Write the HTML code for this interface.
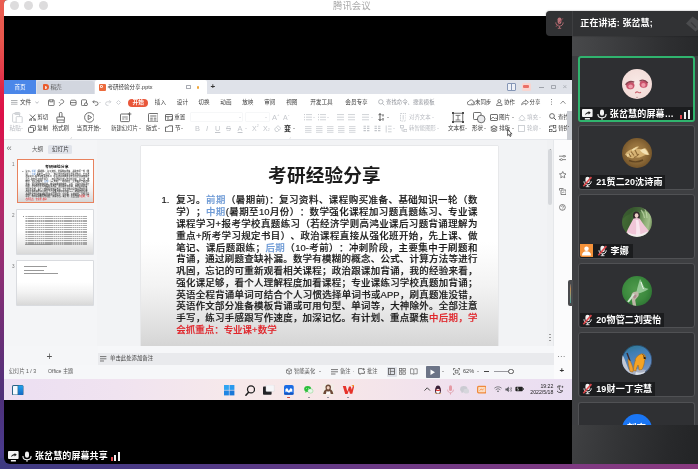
<!DOCTYPE html>
<html lang="zh-CN">
<head>
<meta charset="utf-8">
<title>腾讯会议</title>
<style>
*{box-sizing:border-box;margin:0;padding:0}
html,body{width:698px;height:469px;overflow:hidden}
body{position:relative;background:#000;font-family:"Liberation Sans","Noto Sans CJK SC",sans-serif;color:#333}
.abs,.abs *{position:absolute}
.abs{position:absolute}
.t{white-space:nowrap;line-height:1}
#wall{left:0;top:0;width:698px;height:469px;background:linear-gradient(180deg,#eb5e52 0%,#e8564c 8.5%,#e43c4a 15%,#de1848 21%,#dc1048 24.5%,#cc1c56 34%,#b02a6a 45%,#8e2e74 58%,#782e76 66%,#5c3078 78%,#4e307a 85%,#4a3a8c 96%,#3e3a80 100%)}
#wallb{left:0;top:458px;width:698px;height:11px;background:linear-gradient(90deg,#3e3a80 0%,#4e3a86 25%,#6e3a86 55%,#8a3a80 100%)}
#win{left:4px;top:0;width:694px;height:464px;background:#000;border-radius:4px 0 0 6px;overflow:hidden;will-change:transform}
#titlebar{left:0;top:0;width:694px;height:16px;background:#fff}
.tl{width:9px;height:9px;border-radius:50%;background:#dddcdd;top:1.3px}
#share{left:0;top:80px;width:568px;height:320px;background:#f3f4f6;overflow:hidden}
#rpanel{left:568px;top:16px;width:126px;height:448px;background:linear-gradient(180deg,#3a3b3d 0%,#3e3f42 12%,#3e3f42 100%)}
</style>
</head>
<body>
<div id="wall" class="abs"></div><div id="wallb" class="abs"></div>
<div id="win" class="abs">
  <div id="titlebar" class="abs">
    <div class="tl" style="left:5.5px"></div>
    <div class="tl" style="left:20px"></div>
    <div class="tl" style="left:34.7px"></div>
    <div class="t" style="left:329.1px;top:1px;font-size:9.4px;color:#aaa">腾讯会议</div>
  </div>
  <div id="share" class="abs">
  <style>
#share .s{font-size:5.6px;color:#3a3a3a;line-height:1;white-space:nowrap}
#share .g{color:#b9bcc2}
#share .ic{stroke:#444;fill:none;stroke-width:0.8}
#share .icg{stroke:#c4c7cc;fill:none;stroke-width:0.8}
.dd{width:0;height:0;border-left:1.3px solid transparent;border-right:1.3px solid transparent;border-top:1.6px solid #555}
.dd.g{border-top-color:#c0c3c8}
#slide{left:137px;top:66px;width:357px;height:200px;background:linear-gradient(180deg,#fff 0%,#fff 48%,#f3f3f3 70%,#e2e2e2 88%,#d5d5d5 100%);box-shadow:0 0 1px rgba(0,0,0,.25)}
.sl-title{left:5px;width:357px;top:18px;text-align:center;font-size:18.6px;font-weight:700;color:#1c1c1c;line-height:24px;letter-spacing:0.2px;white-space:nowrap}
.ln{left:35.2px;width:301.2px;height:11.65px;line-height:11.65px;font-size:9.45px;font-weight:500;color:#1a1a1a;white-space:nowrap;text-align:justify;text-align-last:justify;text-spacing-trim:space-all;-webkit-text-stroke:.18px}
.ln span{position:static}
.thumb .ln{opacity:.82}
.ln.last{text-align-last:left;letter-spacing:0.05px}
.bl{color:#6f9bd6}
.rd{color:#e0262c}
</style>
<!-- tab row -->
<div style="left:0;top:0;width:568px;height:14px;background:#dfe2e9"></div>
<div style="left:0;top:0;width:32px;height:14px;background:#4b87e9"></div>
<div class="s" style="left:10.5px;top:4.5px;color:#fff">首页</div>
<div style="left:33px;top:0.5px;width:57px;height:13.5px;background:#d2d6df;border-radius:2px 2px 0 0"></div>
<div style="left:39px;top:4px;width:5.6px;height:6.4px;background:#ea5b2c;border-radius:1px 3px 3px 1px"></div>
<div style="left:40.6px;top:5.6px;width:2.2px;height:3.2px;background:#f6d9cf;border-radius:0 1.5px 1.5px 0"></div>
<div class="s" style="left:46.5px;top:4.5px;color:#555">稻壳</div>
<div style="left:90.5px;top:0;width:112px;height:14px;background:#fff;border-radius:2px 2px 0 0"></div>
<div style="left:94.6px;top:4px;width:7px;height:6.6px;background:#ec6a3c;border-radius:1px"></div>
<div style="left:96.4px;top:5.3px;width:2.6px;height:2.4px;border:0.8px solid #fbe3d8;border-radius:0 1px 1px 0;border-left:0.9px solid #fbe3d8"></div>
<div class="s" style="left:103.6px;top:4.6px;color:#333;font-size:5.5px">考研经验分享.pptx</div>
<div style="left:182px;top:5px;width:4.6px;height:3.6px;border:0.7px solid #a8abb2;border-radius:0.6px"></div>
<div style="left:192.6px;top:6px;width:2.6px;height:2.6px;border-radius:50%;background:#f0a63a"></div>
<div class="s" style="left:206.5px;top:3px;font-size:8px;color:#333;font-weight:700">+</div>
<!-- tab row right icons -->
<div style="left:503px;top:3px;width:9px;height:7.6px;border:0.9px solid #8596b6;border-radius:1px;background:#eef1f7"></div>
<div style="left:507.2px;top:3px;width:0.9px;height:7.6px;background:#8596b6"></div>
<div style="left:517.5px;top:3.2px;width:9px;height:7.4px;background:#f9d5d0;border-radius:1.5px"></div>
<div style="left:519px;top:5px;width:6px;height:3px;background:#ea6f66;border-radius:1px"></div>
<div style="left:535px;top:7px;width:4.6px;height:0.8px;background:#9fa3ab"></div>
<div style="left:547px;top:4.6px;width:4.6px;height:4.2px;border:0.8px solid #a3a7af;border-radius:0.8px"></div>
<div class="s" style="left:558.6px;top:2.6px;font-size:8px;color:#a9adb4">×</div>
<!-- menu row -->
<div style="left:0;top:14px;width:568px;height:46px;background:#fff"></div>
<div style="left:0;top:59.4px;width:568px;height:0.8px;background:#e6e8ec"></div>
<svg style="left:7px;top:19.5px" width="6.5" height="5.5" viewBox="0 0 6.5 5.5"><path d="M0 .6h6.500M0 2.750h6.500M0 4.900h6.500" stroke="#8d9096" stroke-width=".8"/></svg>
<div class="s" style="left:16px;top:19.600px">文件</div>
<svg style="left:30.500px;top:21px" width="4" height="3" viewBox="0 0 4 3"><path d="M.3.500L2 2.300 3.700.500" class="icg" style="stroke:#a9acb2"/></svg>
<svg style="left:43.500px;top:18.800px" width="66" height="7.500" viewBox="0 0 66 7.500">
  <g class="ic" style="stroke:#555">
  <rect x=".5" y=".8" width="5.600" height="5.800" rx=".8"/><path d="M1.800.8v2h3V.8"/>
  <path d="M12.500 1.200a1.900 1.900 0 1 1 1.300 3.300M13.800 4.500L11.200 6.800M11 3.200l1.200 1.200"/>
  <rect x="22.500" y="1.200" width="5.600" height="5" rx="1.200"/><path d="M22.500 3.600h5.600"/>
  <rect x="33.500" y=".8" width="5" height="5.800" rx=".8"/><circle cx="38" cy="5.200" r="1.500" fill="#fff"/>
  <path d="M45 2.800h3.200a1.800 1.800 0 0 1 0 3.600h-1M46.200 1.300L44.700 2.800l1.500 1.500"/>
  </g>
  <path d="M62.600 2.800h-3.200a1.800 1.800 0 0 0 0 3.600h1M61.400 1.300l1.500 1.500-1.500 1.500" class="icg"/>
</svg>
<div class="dd" style="left:95.300px;top:22px;transform:scale(.7)"></div>
<svg style="left:111.500px;top:20px" width="5" height="5" viewBox="0 0 5 5"><path d="M2.500.500L4.500 2.500 2.500 4.500.500 2.500z" class="icg"/></svg>
<div style="left:124.400px;top:18.500px;width:19.600px;height:8.200px;border-radius:4.100px;background:#e9573a"></div>
<div class="s" style="left:128.600px;top:19.700px;color:#fff;font-weight:700;font-size:5.700px">开始</div>
<div class="s" style="left:150.800px;top:19.600px">插入</div>
<div class="s" style="left:172.800px;top:19.600px">设计</div>
<div class="s" style="left:194.300px;top:19.600px">切换</div>
<div class="s" style="left:216.300px;top:19.600px">动画</div>
<div class="s" style="left:238.200px;top:19.600px">放映</div>
<div class="s" style="left:260.200px;top:19.600px">审阅</div>
<div class="s" style="left:282.200px;top:19.600px">视图</div>
<div class="s" style="left:306.200px;top:19.600px">开发工具</div>
<div class="s" style="left:341.300px;top:19.600px">会员专享</div>
<svg style="left:373.500px;top:19px" width="7" height="7" viewBox="0 0 7 7"><circle cx="2.800" cy="2.800" r="2.200" class="ic" style="stroke:#a6a9af"/><path d="M4.400 4.400L6.300 6.300" class="ic" style="stroke:#a6a9af"/></svg>
<div class="s" style="left:382px;top:19.600px;color:#8f9299;font-size:5.400px">查找命令、搜索模板</div>
<svg style="left:462.500px;top:18.800px" width="8" height="7" viewBox="0 0 8 7"><path d="M2 5.800h4.200a1.600 1.600 0 0 0 .2-3.200 2.300 2.300 0 0 0-4.400-.2A1.700 1.700 0 0 0 2 5.800z" class="ic" style="stroke:#666"/><path d="M4.500 4.200a1.200 1.200 0 1 0 1.200-1.200" class="ic" style="stroke:#666;stroke-width:.6"/></svg>
<div class="s" style="left:471px;top:19.600px;font-size:5.400px">未同步</div>
<svg style="left:491.500px;top:18.800px" width="7" height="7" viewBox="0 0 7 7"><circle cx="3.300" cy="2" r="1.500" class="ic" style="stroke:#666"/><path d="M.600 6.500c0-2 1.200-2.800 2.700-2.800s2.700.8 2.700 2.800z" class="ic" style="stroke:#666"/></svg>
<div class="s" style="left:500px;top:19.600px;font-size:5.400px">协作</div>
<svg style="left:516.500px;top:18.800px" width="8" height="7" viewBox="0 0 8 7"><path d="M.600 5.800c.400-2.400 2-3.600 4-3.600V.800L7.400 3.300 4.600 5.800V4.400c-1.600 0-2.900.400-4 1.400z" class="ic" style="stroke:#666"/></svg>
<div class="s" style="left:525.500px;top:19.600px;font-size:5.400px">分享</div>
<div style="left:546.600px;top:19.200px;width:1px;height:1px;background:#888;box-shadow:0 2.400px 0 #888,0 4.800px 0 #888"></div>
<svg style="left:556px;top:20px" width="6" height="4.500" viewBox="0 0 6 4.500"><path d="M.500 3.800L3 1 5.500 3.800" class="ic" style="stroke:#777"/></svg>
<div style="left:0;top:60.2px;width:93px;height:226px;background:#f4f5f7"></div>
<div style="left:93px;top:60.2px;width:456px;height:226px;background:#f2f3f5"></div>
<div class="s" style="left:2.6px;top:63.4px;font-size:9.5px;color:#777">«</div>
<div class="s" style="left:28px;top:66.6px;color:#555">大纲</div>
<div style="left:44.3px;top:64.6px;width:24px;height:9.6px;background:#e0e3ea;border-radius:1.5px"></div>
<div class="s" style="left:48px;top:66.6px;color:#333">幻灯片</div>
<div style="left:12.7px;top:78.9px;width:77px;height:44.3px;border:1px solid #e8825e;background:#fff;overflow:hidden"><div class="thumb" style="left:0;top:0;width:357px;height:200px;transform:scale(0.2118);transform-origin:0 0;background:linear-gradient(180deg,#fff 0%,#fff 48%,#f3f3f3 70%,#e2e2e2 88%,#d5d5d5 100%)"><div class="sl-title">考研经验分享</div>
<div class="ln" style="left:20.6px;width:14px;top:48.47px;text-align-last:left">1.</div>
<div class="ln" style="top:48.47px">复习。<span class="bl">前期</span>（暑期前)：复习资料、课程购买准备、基础知识一轮（数</div>
<div class="ln" style="top:60.24px">学）；<span class="bl">中期</span>(暑期至10月份）：数学强化课程加习题真题练习、专业课</div>
<div class="ln" style="top:72.01px">课程学习+报考学校真题练习（若经济学则高鸿业课后习题背诵理解为</div>
<div class="ln" style="top:83.78px">重点+所考学习规定书目）、政治课程直接从强化班开始，先上课、做</div>
<div class="ln" style="top:95.55px">笔记、课后题跟练；<span class="bl">后期</span>（10-考前）：冲刺阶段，主要集中于刷题和</div>
<div class="ln" style="top:107.32px">背诵，通过刷题查缺补漏。数学有模糊的概念、公式、计算方法等进行</div>
<div class="ln" style="top:119.09px">巩固，忘记的可重新观看相关课程；政治跟课加背诵，我的经验来看，</div>
<div class="ln" style="top:130.86px">强化课足够，看个人理解程度加看课程；专业课练习学校真题加背诵；</div>
<div class="ln" style="top:142.63px">英语全程背诵单词可结合个人习惯选择单词书或APP，刷真题准没错，</div>
<div class="ln" style="top:154.4px">英语作文部分准备模板背诵或可用句型、单词等，大神除外。全部注意</div>
<div class="ln" style="top:166.17px">手写，练习手感跟写作速度，加深记忆。有计划、重点聚焦<span class="rd">中后期，学</span></div>
<div class="ln last" style="top:177.94px"><span class="rd">会抓重点：专业课+数学</span></div></div></div>
<div class="s" style="left:8px;top:83px;font-size:4.6px;color:#777">1</div>
<div style="left:13.2px;top:130.2px;width:76px;height:43.6px;background:linear-gradient(180deg,#fff 0%,#fff 48%,#f3f3f3 70%,#e4e4e4 88%,#d8d8d8 100%);box-shadow:0 0 0 .7px #cdd0d4"><div style="left:8.3px;top:5.6px;width:61.5px;height:29px;background:repeating-linear-gradient(90deg,rgba(255,255,255,.45) 0,rgba(255,255,255,.45) .6px,transparent .6px,transparent 1.9px),repeating-linear-gradient(180deg,#777 0,#777 1.25px,transparent 1.25px,transparent 2.19px);opacity:.62"></div><div style="left:8.3px;top:34.1px;width:26px;height:1.05px;background:#8f8f8f;opacity:.8"></div><div style="left:5.6px;top:5.6px;width:1.4px;height:1.05px;background:#8f8f8f"></div></div>
<div class="s" style="left:8px;top:134px;font-size:4.6px;color:#777">2</div>
<div style="left:13.2px;top:180.8px;width:76px;height:43.9px;background:linear-gradient(180deg,#fff 0%,#fff 48%,#f3f3f3 70%,#e4e4e4 88%,#d8d8d8 100%);box-shadow:0 0 0 .7px #cdd0d4"><div style="left:6.8px;top:5.5px;width:23px;height:.9px;background:#999"></div><div style="left:6.8px;top:9.1px;width:20px;height:.9px;background:#999"></div><div style="left:6.8px;top:12.7px;width:34px;height:.9px;background:#999"></div></div>
<div class="s" style="left:8px;top:184.6px;font-size:4.6px;color:#777">3</div>
<div style="left:543px;top:60.2px;width:6px;height:226px;background:#f0f1f3"></div>
<div style="left:543.6px;top:68.5px;width:4.6px;height:56px;background:#d6d8dc;border-radius:2.3px"></div>
<div style="left:549px;top:60.2px;width:19px;height:240px;background:#fbfbfc;border-left:.6px solid #e6e8eb"></div>

<div id="slide"><div class="sl-title">考研经验分享</div>
<div class="ln" style="left:20.6px;width:14px;top:48.47px;text-align-last:left">1.</div>
<div class="ln" style="top:48.47px">复习。<span class="bl">前期</span>（暑期前)：复习资料、课程购买准备、基础知识一轮（数</div>
<div class="ln" style="top:60.24px">学）；<span class="bl">中期</span>(暑期至10月份）：数学强化课程加习题真题练习、专业课</div>
<div class="ln" style="top:72.01px">课程学习+报考学校真题练习（若经济学则高鸿业课后习题背诵理解为</div>
<div class="ln" style="top:83.78px">重点+所考学习规定书目）、政治课程直接从强化班开始，先上课、做</div>
<div class="ln" style="top:95.55px">笔记、课后题跟练；<span class="bl">后期</span>（10-考前）：冲刺阶段，主要集中于刷题和</div>
<div class="ln" style="top:107.32px">背诵，通过刷题查缺补漏。数学有模糊的概念、公式、计算方法等进行</div>
<div class="ln" style="top:119.09px">巩固，忘记的可重新观看相关课程；政治跟课加背诵，我的经验来看，</div>
<div class="ln" style="top:130.86px">强化课足够，看个人理解程度加看课程；专业课练习学校真题加背诵；</div>
<div class="ln" style="top:142.63px">英语全程背诵单词可结合个人习惯选择单词书或APP，刷真题准没错，</div>
<div class="ln" style="top:154.4px">英语作文部分准备模板背诵或可用句型、单词等，大神除外。全部注意</div>
<div class="ln" style="top:166.17px">手写，练习手感跟写作速度，加深记忆。有计划、重点聚焦<span class="rd">中后期，学</span></div>
<div class="ln last" style="top:177.94px"><span class="rd">会抓重点：专业课+数学</span></div></div>

<svg style="left:7.5px;top:31.5px" width="11" height="11.5" viewBox="0 0 11 11.5"><rect x="2.8" y=".5" width="5" height="2" rx=".6" fill="none" stroke="#c3c6cb" stroke-width=".8"/><rect x=".6" y="1.6" width="7" height="8.600" rx=".8" fill="none" stroke="#c3c6cb" stroke-width=".8"/><rect x="4.200" y="4.600" width="6" height="6.400" rx=".6" fill="#fff" stroke="#c3c6cb" stroke-width=".8"/></svg>
<div class="s" style="left:5.6px;top:45.5px;font-size:5.6px;color:#b9bcc2;">粘贴</div>
<div class="dd g" style="left:17px;top:47.8px;transform:scale(.8)"></div>
<svg style="left:24.5px;top:33.8px" width="7.5" height="7.5" viewBox="0 0 7.5 7.5"><path d="M1 .600L5.800 5.600M6.300.600L1.500 5.600" stroke="#4a4a4a" stroke-width=".8" fill="none"/><circle cx="1.500" cy="6" r="1.100" fill="none" stroke="#4a4a4a" stroke-width=".7"/><circle cx="5.800" cy="6" r="1.100" fill="none" stroke="#4a4a4a" stroke-width=".7"/></svg>
<div class="s" style="left:33.2px;top:34.5px;font-size:5.6px;">剪切</div>
<svg style="left:24px;top:44.6px" width="8" height="8" viewBox="0 0 8 8"><rect x="2.400" y=".500" width="5" height="5" rx=".800" fill="none" stroke="#4a4a4a" stroke-width=".8"/><rect x=".500" y="2.400" width="5" height="5" rx=".800" fill="#fff" stroke="#4a4a4a" stroke-width=".8"/></svg>
<div class="s" style="left:33.2px;top:45.5px;font-size:5.6px;">复制</div>
<svg style="left:51.5px;top:31.8px" width="9.5" height="11.5" viewBox="0 0 9.5 11.5"><path d="M3.400 5V1.600a1.300 1.300 0 0 1 2.600 0V5" fill="none" stroke="#4a4a4a" stroke-width=".8"/><rect x=".800" y="5" width="7.800" height="3" rx=".600" fill="none" stroke="#4a4a4a" stroke-width=".8"/><path d="M1.200 8v2.800h7V8" fill="none" stroke="#4a4a4a" stroke-width=".8"/></svg>
<div class="s" style="left:48.4px;top:45.5px;font-size:5.6px;">格式刷</div>
<svg style="left:79.6px;top:32.2px" width="10.8" height="10.8" viewBox="0 0 10.8 10.8"><circle cx="5.400" cy="5.400" r="4.800" fill="none" stroke="#4a4a4a" stroke-width=".8"/><path d="M4.200 3.200L7.600 5.400 4.200 7.600z" fill="none" stroke="#4a4a4a" stroke-width=".8" stroke-linejoin="round"/></svg>
<div class="s" style="left:72.6px;top:45.5px;font-size:5.6px;">当页开始</div>
<div class="dd" style="left:95px;top:47.8px;transform:scale(.8)"></div>
<svg style="left:116.3px;top:32.2px" width="12" height="10.5" viewBox="0 0 12 10.5"><rect x=".500" y="2" width="9" height="7.600" rx=".800" fill="none" stroke="#4a4a4a" stroke-width=".8"/><path d="M2.200 5h5.600M2.200 7h2.200M5.400 7h2.400" stroke="#4a4a4a" stroke-width=".7"/><path d="M9.600.200v3.600M7.800 2h3.600" stroke="#4a4a4a" stroke-width=".8"/><rect x="8" y=".2" width="3.400" height="3.400" fill="#fff" opacity="0"/></svg>
<div class="s" style="left:107px;top:45.6px;font-size:5.4px;">新建幻灯片</div>
<div class="dd" style="left:134.7px;top:47.8px;transform:scale(.8)"></div>
<svg style="left:143.8px;top:33px" width="10.6" height="9.4" viewBox="0 0 10.6 9.4"><rect x=".500" y=".500" width="9.600" height="8.400" rx=".800" fill="none" stroke="#4a4a4a" stroke-width=".8"/><path d="M2.200 3h6.200M2.200 5.200h2.600M5.800 5.200h2.600M2.200 7h2.600M5.800 7h2.600" stroke="#4a4a4a" stroke-width=".8"/></svg>
<div class="s" style="left:142px;top:45.5px;font-size:5.6px;">版式</div>
<div class="dd" style="left:153.7px;top:47.8px;transform:scale(.8)"></div>
<svg style="left:160.8px;top:33.8px" width="8" height="7.5" viewBox="0 0 8 7.5"><rect x=".500" y=".500" width="7" height="6.200" rx=".500" fill="none" stroke="#4a4a4a" stroke-width=".8"/><path d="M.500 2.600h7M3 2.600v4" stroke="#4a4a4a" stroke-width=".7"/><path d="M4.600 5.200l1.200 1.200 1.800-2.400" stroke="#4a4a4a" stroke-width=".8" fill="none"/></svg>
<div class="s" style="left:170.2px;top:34.5px;font-size:5.6px;">重置</div>
<svg style="left:160.8px;top:44.8px" width="8" height="7.5" viewBox="0 0 8 7.5"><path d="M.500 2h2.500l.800-1.200h3.700V6.800H.500z" fill="none" stroke="#4a4a4a" stroke-width=".8"/></svg>
<div class="s" style="left:171px;top:45.5px;font-size:5.6px;">节</div>
<div class="dd" style="left:177.1px;top:47.8px;transform:scale(.8)"></div>
<div style="left:185.5px;top:32.4px;width:53.500px;height:10px;border:.6px solid #f6f7f8;border-radius:1px;background:#fff"></div>
<div class="dd g" style="left:234.7px;top:36.8px;transform:scale(.8)"></div>
<div style="left:240.5px;top:32.4px;width:25px;height:10px;border:.6px solid #f6f7f8;border-radius:1px;background:#fff"></div>
<div class="dd g" style="left:261.3px;top:36.8px;transform:scale(.8)"></div>
<div class="s" style="left:268px;top:33.5px;font-size:7.5px;color:#c3c6cb;">A</div>
<div class="s" style="left:273px;top:33.3px;font-size:4px;color:#c3c6cb;">+</div>
<div class="s" style="left:279px;top:33.8px;font-size:7px;color:#c3c6cb;">A</div>
<div class="s" style="left:284px;top:33.3px;font-size:4px;color:#c3c6cb;">-</div>
<div class="s" style="left:191px;top:44.6px;font-size:7.4px;color:#c3c6cb;font-weight:400;">B</div>
<div class="s" style="left:202px;top:44.6px;font-size:7.4px;color:#c3c6cb;font-style:italic;">I</div>
<div class="s" style="left:211px;top:44.6px;font-size:7.4px;color:#c3c6cb;text-decoration:underline;">U</div>
<div class="s" style="left:222px;top:44.6px;font-size:7.4px;color:#c3c6cb;text-decoration:line-through;">S</div>
<div class="s" style="left:233.6px;top:44.6px;font-size:7.4px;color:#c3c6cb;text-decoration:underline;">A</div>
<div class="dd g" style="left:241.3px;top:47.8px;transform:scale(.8)"></div>
<div class="s" style="left:248px;top:44.8px;font-size:7px;color:#c3c6cb;">X</div>
<div class="s" style="left:252.8px;top:44.6px;font-size:3.5px;color:#c3c6cb;">2</div>
<div class="s" style="left:259px;top:44.8px;font-size:7px;color:#c3c6cb;">X</div>
<div class="s" style="left:263.8px;top:48.6px;font-size:3.5px;color:#c3c6cb;">2</div>
<svg style="left:269.6px;top:45px" width="7.5" height="7" viewBox="0 0 7.5 7"><path d="M.600 4L4 .600 6.900 3.500 3.500 6.500H1.800z" fill="none" stroke="#c3c6cb" stroke-width=".8"/><path d="M2.300 2.300l2.900 2.900" stroke="#c3c6cb" stroke-width=".7"/></svg>
<div class="s" style="left:280px;top:44.8px;font-size:7px;color:#2a2a2a;font-weight:700;">变</div>
<div class="dd" style="left:289.1px;top:47.8px;transform:scale(.8)"></div>
<svg style="left:300px;top:34.2px" width="8" height="6.6" viewBox="0 0 8 6.6"><rect x="0" y="0.1" width="1" height="1" fill="#c3c6cb"/><path d="M2 0.6h6" stroke="#c3c6cb" stroke-width="0.8"/><rect x="0" y="2.7" width="1" height="1" fill="#c3c6cb"/><path d="M2 3.2h6" stroke="#c3c6cb" stroke-width="0.8"/><rect x="0" y="5.3" width="1" height="1" fill="#c3c6cb"/><path d="M2 5.8h6" stroke="#c3c6cb" stroke-width="0.8"/></svg>
<div class="dd g" style="left:309.3px;top:36.8px;transform:scale(.8)"></div>
<svg style="left:314px;top:34.2px" width="8" height="6.6" viewBox="0 0 8 6.6"><rect x="0" y="0.1" width="1" height="1" fill="#c3c6cb"/><path d="M2 0.6h6" stroke="#c3c6cb" stroke-width="0.8"/><rect x="0" y="2.7" width="1" height="1" fill="#c3c6cb"/><path d="M2 3.2h6" stroke="#c3c6cb" stroke-width="0.8"/><rect x="0" y="5.3" width="1" height="1" fill="#c3c6cb"/><path d="M2 5.8h6" stroke="#c3c6cb" stroke-width="0.8"/></svg>
<div class="dd g" style="left:323.3px;top:36.8px;transform:scale(.8)"></div>
<svg style="left:332.5px;top:34.2px" width="7" height="6.6" viewBox="0 0 7 6.6"><path d="M0 0.6h7" stroke="#c3c6cb" stroke-width="0.8"/><path d="M0 3.2h7" stroke="#c3c6cb" stroke-width="0.8"/><path d="M0 5.8h7" stroke="#c3c6cb" stroke-width="0.8"/></svg>
<svg style="left:344px;top:34.2px" width="7" height="6.6" viewBox="0 0 7 6.6"><path d="M0 0.6h7" stroke="#c3c6cb" stroke-width="0.8"/><path d="M0 3.2h7" stroke="#c3c6cb" stroke-width="0.8"/><path d="M0 5.8h7" stroke="#c3c6cb" stroke-width="0.8"/></svg>
<svg style="left:358px;top:34px" width="7" height="6.6" viewBox="0 0 7 6.6"><path d="M0 0.6h7" stroke="#c3c6cb" stroke-width="0.8"/><path d="M0 3.2h7" stroke="#c3c6cb" stroke-width="0.8"/><path d="M0 5.8h7" stroke="#c3c6cb" stroke-width="0.8"/></svg>
<div class="dd g" style="left:366.7px;top:36.8px;transform:scale(.8)"></div>
<svg style="left:373.6px;top:33.4px" width="6.5" height="8.5" viewBox="0 0 6.5 8.5"><path d="M2 .600v7M.500 2.200L2 .600 3.500 2.200M.500 6L2 7.600 3.500 6" stroke="#333" stroke-width=".8" fill="none"/><path d="M5 1.200v2.200M5 5v2.600" stroke="#333" stroke-width=".9"/></svg>
<div class="dd" style="left:383.1px;top:36.8px;transform:scale(.8)"></div>
<svg style="left:395.6px;top:33.4px" width="6.5" height="8.5" viewBox="0 0 6.5 8.5"><rect x=".500" y=".500" width="5.500" height="7.500" fill="none" stroke="#c3c6cb" stroke-width=".8" stroke-dasharray="1.500 .800"/><path d="M3.200 2v4.500" stroke="#c3c6cb" stroke-width=".8"/></svg>
<div class="s" style="left:405px;top:34.6px;font-size:5.4px;color:#b9bcc2;">对齐文本</div>
<div class="dd g" style="left:428.1px;top:36.8px;transform:scale(.8)"></div>
<svg style="left:301px;top:45.6px" width="6.5" height="7.1" viewBox="0 0 6.5 7.1"><path d="M0 0.6h6.5" stroke="#c3c6cb" stroke-width="0.7"/><path d="M0 2.5h6.5" stroke="#c3c6cb" stroke-width="0.7"/><path d="M0 4.4h6.5" stroke="#c3c6cb" stroke-width="0.7"/><path d="M0 6.3h6.5" stroke="#c3c6cb" stroke-width="0.7"/></svg>
<svg style="left:312px;top:45.6px" width="6.5" height="7.1" viewBox="0 0 6.5 7.1"><path d="M0 0.6h6.5" stroke="#c3c6cb" stroke-width="0.7"/><path d="M0 2.5h6.5" stroke="#c3c6cb" stroke-width="0.7"/><path d="M0 4.4h6.5" stroke="#c3c6cb" stroke-width="0.7"/><path d="M0 6.3h6.5" stroke="#c3c6cb" stroke-width="0.7"/></svg>
<svg style="left:323px;top:45.6px" width="6.5" height="7.1" viewBox="0 0 6.5 7.1"><path d="M0 0.6h6.5" stroke="#c3c6cb" stroke-width="0.7"/><path d="M0 2.5h6.5" stroke="#c3c6cb" stroke-width="0.7"/><path d="M0 4.4h6.5" stroke="#c3c6cb" stroke-width="0.7"/><path d="M0 6.3h6.5" stroke="#c3c6cb" stroke-width="0.7"/></svg>
<svg style="left:334px;top:45.6px" width="6.5" height="7.1" viewBox="0 0 6.5 7.1"><path d="M0 0.6h6.5" stroke="#c3c6cb" stroke-width="0.7"/><path d="M0 2.5h6.5" stroke="#c3c6cb" stroke-width="0.7"/><path d="M0 4.4h6.5" stroke="#c3c6cb" stroke-width="0.7"/><path d="M0 6.3h6.5" stroke="#c3c6cb" stroke-width="0.7"/></svg>
<svg style="left:345px;top:45.6px" width="6.5" height="7.1" viewBox="0 0 6.5 7.1"><path d="M0 0.6h6.5" stroke="#c3c6cb" stroke-width="0.7"/><path d="M0 2.5h6.5" stroke="#c3c6cb" stroke-width="0.7"/><path d="M0 4.4h6.5" stroke="#c3c6cb" stroke-width="0.7"/><path d="M0 6.3h6.5" stroke="#c3c6cb" stroke-width="0.7"/></svg>
<svg style="left:358.5px;top:45px" width="7" height="7" viewBox="0 0 7 7"><path d="M.500 1.200h2.400M4 1.200h2.400M.500 3.400h2.400M4 3.400h2.400M.500 5.600h2.400M4 5.600h2.400" stroke="#c3c6cb" stroke-width="1.100"/></svg>
<svg style="left:369.5px;top:45px" width="7" height="7" viewBox="0 0 7 7"><path d="M.500 1.200h2.400M4 1.200h2.400M.500 3.400h2.400M4 3.400h2.400M.500 5.600h2.400M4 5.600h2.400" stroke="#c3c6cb" stroke-width="1.100"/></svg>
<svg style="left:381px;top:44.6px" width="7" height="8" viewBox="0 0 7 8"><path d="M1.200.500v7" stroke="#c3c6cb" stroke-width=".8"/><path d="M3 1.200h3.600M3 4h3.600M3 6.800h3.600" stroke="#c3c6cb" stroke-width=".8"/></svg>
<div class="dd g" style="left:389.3px;top:47.8px;transform:scale(.8)"></div>
<svg style="left:395.6px;top:44.8px" width="7.5" height="7.5" viewBox="0 0 7.5 7.5"><rect x=".500" y=".500" width="3" height="2.400" fill="none" stroke="#c3c6cb" stroke-width=".8"/><path d="M2 3v3h2" stroke="#c3c6cb" stroke-width=".7" fill="none"/><rect x="4" y="4.400" width="3" height="2.400" fill="none" stroke="#c3c6cb" stroke-width=".8"/></svg>
<div class="s" style="left:405px;top:45.6px;font-size:5.4px;color:#b9bcc2;">转智能图形</div>
<div class="dd g" style="left:433.1px;top:47.8px;transform:scale(.8)"></div>
<svg style="left:447.6px;top:32.4px" width="12" height="11" viewBox="0 0 12 11"><rect x="1.200" y="1.200" width="9.600" height="8.600" fill="none" stroke="#4a4a4a" stroke-width=".8"/><path d="M3.600 3.400h4.800M6 3.400v4.600M3.600 8h4.800" stroke="#4a4a4a" stroke-width=".7"/><g fill="#4a4a4a"><rect x="0" y="0" width="2" height="2"/><rect x="10" y="0" width="2" height="2"/><rect x="0" y="9" width="2" height="2"/><rect x="10" y="9" width="2" height="2"/></g></svg>
<div class="s" style="left:444px;top:45.5px;font-size:5.6px;">文本框</div>
<div class="dd" style="left:461.3px;top:47.8px;transform:scale(.8)"></div>
<svg style="left:468.6px;top:32.2px" width="13" height="11.5" viewBox="0 0 13 11.5"><rect x=".500" y=".500" width="7.500" height="7" rx=".800" fill="none" stroke="#4a4a4a" stroke-width=".8"/><circle cx="8.200" cy="7" r="3.800" fill="#e9eaec" stroke="#4a4a4a" stroke-width=".8"/></svg>
<div class="s" style="left:468px;top:45.5px;font-size:5.6px;">形状</div>
<div class="dd" style="left:480.3px;top:47.8px;transform:scale(.8)"></div>
<svg style="left:485.6px;top:33.8px" width="8" height="7" viewBox="0 0 8 7"><rect x=".500" y=".500" width="7" height="6" rx=".600" fill="none" stroke="#4a4a4a" stroke-width=".8"/><path d="M.800 5.400l2.200-2.400 1.800 1.800 1-1 1.600 1.600" stroke="#4a4a4a" stroke-width=".7" fill="none"/></svg>
<div class="s" style="left:495px;top:34.5px;font-size:5.6px;">图片</div>
<div class="dd" style="left:507.7px;top:36.8px;transform:scale(.8)"></div>
<svg style="left:485.6px;top:44.6px" width="8" height="7.5" viewBox="0 0 8 7.5"><path d="M.800 2.200L4 .600l3.200 1.600L4 3.800zM.800 3.800L4 5.400l3.200-1.600M.800 5.400L4 7l3.200-1.600" stroke="#4a4a4a" stroke-width=".8" fill="none"/></svg>
<div class="s" style="left:495px;top:45.5px;font-size:5.6px;">排版</div>
<div class="dd" style="left:507.7px;top:47.8px;transform:scale(.8)"></div>
<svg style="left:513.6px;top:33.6px" width="8" height="7.5" viewBox="0 0 8 7.5"><path d="M1 4.500L4 1l3 3.500-3 2.500z" fill="none" stroke="#c3c6cb" stroke-width=".8"/><path d="M.500 7h7" stroke="#c3c6cb" stroke-width=".9"/></svg>
<div class="s" style="left:523px;top:34.5px;font-size:5.6px;color:#b9bcc2;">填充</div>
<div class="dd g" style="left:534.7px;top:36.8px;transform:scale(.8)"></div>
<svg style="left:514px;top:45px" width="7" height="7" viewBox="0 0 7 7"><rect x=".500" y=".500" width="6" height="6" fill="none" stroke="#c3c6cb" stroke-width=".8"/></svg>
<div class="s" style="left:523px;top:45.5px;font-size:5.6px;color:#b9bcc2;">轮廓</div>
<div class="dd g" style="left:534.7px;top:47.8px;transform:scale(.8)"></div>
<svg style="left:544.6px;top:33.4px" width="7.5" height="7.5" viewBox="0 0 7.5 7.5"><circle cx="3" cy="3" r="2.400" fill="none" stroke="#4a4a4a" stroke-width=".8"/><path d="M4.800 4.800L7 7" stroke="#4a4a4a" stroke-width=".9"/></svg>
<div class="s" style="left:554px;top:34.5px;font-size:5.6px;">查找</div>
<svg style="left:545px;top:44.8px" width="7.5" height="7.5" viewBox="0 0 7.5 7.5"><path d="M.600 3V1h3M3.600 1L2.600.2M7 4.500v2H4M4 6.500l1 .8" stroke="#4a4a4a" stroke-width=".8" fill="none"/><rect x="4.400" y=".600" width="2.400" height="2.400" fill="none" stroke="#4a4a4a" stroke-width=".7"/><rect x=".600" y="4.400" width="2.400" height="2.400" fill="none" stroke="#4a4a4a" stroke-width=".7"/></svg>
<div class="s" style="left:554px;top:45.5px;font-size:5.6px;">替换</div>
<div style="left:562.6px;top:31px;width:5px;height:29px;background:#c9ccd2"></div>
<div style="left:564px;top:46px;width:1.400px;height:1px;background:#777"></div>
<svg style="left:502.6px;top:48.6px" width="6" height="8" viewBox="0 0 6 8"><path d="M.600.600v6l1.500-1.300 1 2.200 1-.500-1-2.100h2z" fill="#fff" stroke="#222" stroke-width=".7"/></svg>
<div class="s" style="left:65.5px;top:54.5px;font-size:4px;color:#999;">⌟</div>
<div class="s" style="left:285px;top:54.5px;font-size:4px;color:#bbb;">⌟</div>

<div style="left:0px;top:266.4px;width:568px;height:33px;background:#f6f7f9"></div>
<div style="left:0px;top:266.4px;width:93.5px;height:18.2px;background:#f5f6f8"></div>
<div style="left:93.5px;top:273.4px;width:456px;height:11.2px;background:#e9eaed"></div>
<svg style="left:96.4px;top:276.2px" width="6.4" height="5.6" viewBox="0 0 6.4 5.6"><path d="M0 .6h6.400M0 2.800h6.400M0 5h4" stroke="#555" stroke-width=".8"/></svg>
<div class="s" style="left:106px;top:276.19px;font-size:5.4px;color:#444;">单击此处添加备注</div>
<div style="left:549.5px;top:266.4px;width:18.5px;height:33px;background:#fbfbfc"></div>
<div style="left:553.6px;top:276px;width:1.300px;height:1.300px;border-radius:50%;background:#666;box-shadow:2.800px 0 0 #666,5.600px 0 0 #666"></div>
<div class="s" style="left:555.6px;top:287.24px;font-size:8px;color:#333;font-weight:700;">+</div>
<div class="s" style="left:42.6px;top:272px;font-size:10px;color:#555;">+</div>
<div class="s" style="left:5px;top:289px;font-size:5.2px;color:#555;">幻灯片 1 / 3</div>
<div class="s" style="left:44px;top:289px;font-size:5.2px;color:#555;">Office 主题</div>
<svg style="left:281.6px;top:288.4px" width="6.4" height="6.6" viewBox="0 0 6.4 6.6"><path d="M3.200.500L5.900 2v3L3.200 6.100.500 5V2z M.500 2l2.700 1.300L5.900 2M3.200 3.300v2.800" fill="none" stroke="#666" stroke-width=".7"/></svg>
<div class="s" style="left:290px;top:288.94px;font-size:5.3px;color:#555;">智能美化</div>
<div style="left:315px;top:291px;width:0;height:0;border-left:1.300px solid transparent;border-right:1.300px solid transparent;border-bottom:1.600px solid #666"></div>
<svg style="left:327px;top:289px" width="7" height="5.6" viewBox="0 0 7 5.6"><path d="M0 .6h7M0 2.800h7M0 5h4.500" stroke="#555" stroke-width=".8"/></svg>
<div class="s" style="left:336px;top:288.94px;font-size:5.3px;color:#555;">备注</div>
<div class="s" style="left:348.4px;top:288.94px;font-size:5.3px;color:#555;">·</div>
<svg style="left:353.8px;top:288.4px" width="7" height="6.5" viewBox="0 0 7 6.5"><path d="M4.500.600H.600v4.800h1.200v1l1.400-1h3.200V3" fill="none" stroke="#555" stroke-width=".8"/><path d="M5.600 0v2.600M4.300 1.300h2.600" stroke="#555" stroke-width=".7"/></svg>
<div class="s" style="left:363px;top:288.94px;font-size:5.3px;color:#555;">批注</div>
<div style="left:382.6px;top:286.6px;width:10px;height:10.6px;background:#dfe2e9;border-radius:1px"></div>
<svg style="left:384.3px;top:288.4px" width="6.8" height="6.8" viewBox="0 0 6.8 6.8"><rect x=".400" y=".400" width="6" height="6" fill="none" stroke="#555" stroke-width=".8"/><path d="M2.400.400v6M2.400 3.400h4" stroke="#555" stroke-width=".7"/></svg>
<svg style="left:395.3px;top:288.4px" width="6.8" height="6.8" viewBox="0 0 6.8 6.8"><g fill="none" stroke="#666" stroke-width=".7"><rect x=".400" y=".400" width="2.400" height="2.400"/><rect x="3.900" y=".400" width="2.400" height="2.400"/><rect x=".400" y="3.900" width="2.400" height="2.400"/><rect x="3.900" y="3.900" width="2.400" height="2.400"/></g></svg>
<svg style="left:406.3px;top:288.4px" width="7.6" height="6.8" viewBox="0 0 7.6 6.8"><path d="M.400.800h2.600l.800.800.800-.800h2.600v5H4.600l-.800.600-.800-.600H.400zM3.800 1.600v4.600" fill="none" stroke="#666" stroke-width=".7"/></svg>
<div style="left:421.8px;top:286.4px;width:14.2px;height:11.2px;background:#6c7487;border-radius:.8px"></div>
<svg style="left:426.4px;top:288.8px" width="5.5" height="6.4" viewBox="0 0 5.5 6.4"><path d="M.500.400L5 3.200.500 6z" fill="#fff"/></svg>
<div class="dd" style="left:438px;top:291.2px;transform:scale(.8)"></div>
<svg style="left:449px;top:288.3px" width="7.2" height="7.2" viewBox="0 0 7.2 7.2"><path d="M.400 2.200V.400h1.800M5 .400h1.800v1.800M6.800 5v1.800H5M2.200 6.800H.400V5" fill="none" stroke="#555" stroke-width=".8"/><rect x="2.200" y="2.200" width="2.800" height="2.800" fill="none" stroke="#555" stroke-width=".7"/></svg>
<div class="s" style="left:459px;top:288.79px;font-size:5.6px;color:#444;">62%</div>
<div class="dd" style="left:473px;top:291.2px;transform:scale(.8)"></div>
<div style="left:480px;top:291.2px;width:5px;height:0.9px;background:#444"></div>
<div style="left:490px;top:291.3px;width:15px;height:0.7px;background:#9a9a9f"></div>
<div style="left:504.4px;top:289px;width:5.400px;height:5.400px;border-radius:50%;border:.8px solid #555;background:#fafafa"></div>
<div style="left:0px;top:299px;width:568px;height:21px;background:linear-gradient(90deg,#ecdff2 0%,#f0e3f0 20%,#f7e9ea 42%,#f7e7e8 58%,#f0e1ee 78%,#e9def2 100%)"></div>
<svg style="left:8px;top:304.6px" width="11.5" height="10.5" viewBox="0 0 11.5 10.5"><defs><linearGradient id="wg" x1="0" y1="0" x2="0" y2="1"><stop offset="0" stop-color="#22a2ee"/><stop offset="1" stop-color="#1468c4"/></linearGradient></defs><rect x="0" y="0" width="11.500" height="10.500" rx="1.500" fill="#2a6486"/><rect x="1" y="1" width="4.600" height="8.500" rx=".5" fill="#f4fbff"/><rect x="6.200" y=".6" width="4.800" height="9.300" rx=".8" fill="url(#wg)"/></svg>
<svg style="left:220.4px;top:305.2px" width="10.4" height="10.4" viewBox="0 0 10.4 10.4"><rect x="0" y="0" width="4.900" height="4.900" fill="#2fa4f2"/><rect x="5.500" y="0" width="4.900" height="4.900" fill="#2a9aee"/><rect x="0" y="5.500" width="4.900" height="4.900" fill="#1f86e4"/><rect x="5.500" y="5.500" width="4.900" height="4.900" fill="#1878d8"/></svg>
<svg style="left:240.6px;top:305px" width="10.5" height="11" viewBox="0 0 10.5 11"><circle cx="6" cy="4.400" r="3.500" fill="none" stroke="#1c1c1c" stroke-width="1.250"/><path d="M3.600 7.200L.900 10.200" stroke="#1c1c1c" stroke-width="1.500" stroke-linecap="round"/></svg>
<svg style="left:259px;top:305.4px" width="11.5" height="10" viewBox="0 0 11.5 10"><rect x="0" y="1.600" width="8.600" height="8.200" rx=".8" fill="#232326"/><rect x="3" y="0" width="8.300" height="6.600" rx=".8" fill="#f6f6f8" stroke="#d4d4da" stroke-width=".4"/></svg>
<svg style="left:279.8px;top:305.4px" width="10.8" height="10.8" viewBox="0 0 10.8 10.8"><g transform="scale(.9)"><rect x="0" y="0" width="10.800" height="10.800" rx="2" fill="#1c6ce4"/><path d="M1.600 7.800V4.600c1.300-1.500 2.400-1.200 3 .400l.800 1.800.800-1.800c.600-1.600 1.700-1.900 3-.400v3.200c-1-.900-1.800-.900-2.400 0-.600.800-2.200.800-2.800 0-.600-.900-1.400-.900-2.400 0z" fill="#fff"/><rect x="0" y="8.800" width="10.800" height="2" rx="1" fill="#1655c0"/></g></svg>
<svg style="left:300px;top:306.2px" width="11.5" height="9.8" viewBox="0 0 11.5 9.8"><g transform="scale(.8)"><ellipse cx="4.600" cy="3.800" rx="4.400" ry="3.700" fill="#2bbf3a"/><path d="M2 6.500l-.600 2 2.200-1.100z" fill="#2bbf3a"/><ellipse cx="8" cy="6.200" rx="3.300" ry="2.800" fill="#e9f7ea"/><ellipse cx="8" cy="6.200" rx="3.300" ry="2.800" fill="none" stroke="#38c24a" stroke-width=".4"/><circle cx="3.200" cy="3" r=".55" fill="#fff"/><circle cx="5.800" cy="3" r=".55" fill="#fff"/></g></svg>
<svg style="left:317.8px;top:304.4px" width="12.5" height="11.5" viewBox="0 0 12.5 11.5"><rect x="0" y="0" width="12.500" height="11.500" rx="1.500" fill="#f3ece6"/><path d="M4 1.500c1-1.200 3.500-1.200 4.500 0 .8 1 .6 2.800 0 3.800 1.500.800 2.500 2.400 2.800 4.800H1.200c.300-2.400 1.300-4 2.800-4.800-.600-1-.800-2.800 0-3.800z" fill="#6e4a38"/><ellipse cx="6.200" cy="3.700" rx="1.500" ry="1.800" fill="#f1d2c0"/><path d="M4.600 7c1 .800 2.400.800 3.400 0l.800 3.500H3.800z" fill="#fafafa"/></svg>
<svg style="left:337.8px;top:304.6px" width="12.5" height="11" viewBox="0 0 12.5 11"><path d="M.800 1h3l1.600 5.400L7 1.600h1.800l1 3.200L11 .600l1.500-.600-2.200 8.800H8L6.900 5.200 5.600 9H3.200z" fill="#e6332a"/><path d="M9.300 0l3.200-.2-1 2z" fill="#f59a23"/></svg>
<div style="left:283.6px;top:317.4px;width:2.4px;height:1px;background:#8a8a94;border-radius:.5px"></div>
<div style="left:303.6px;top:317.4px;width:2.4px;height:1px;background:#8a8a94;border-radius:.5px"></div>
<div style="left:322.8px;top:317.4px;width:2.4px;height:1px;background:#8a8a94;border-radius:.5px"></div>
<div style="left:342.8px;top:317.4px;width:2.4px;height:1px;background:#8a8a94;border-radius:.5px"></div>
<div style="left:283.4px;top:317.4px;width:2.8px;height:1px;background:#d0453c;border-radius:.5px"></div>
<svg style="left:420px;top:307px" width="6.5" height="4.2" viewBox="0 0 6.5 4.2"><path d="M.500 3.600L3.250.800 6 3.600" fill="none" stroke="#333" stroke-width=".9"/></svg>
<svg style="left:429.6px;top:304.8px" width="8" height="9.6" viewBox="0 0 8 9.6"><ellipse cx="4" cy="5.400" rx="3" ry="3.800" fill="#3a2038"/><ellipse cx="4" cy="2.800" rx="2.200" ry="2.400" fill="#3a2038"/><ellipse cx="4" cy="6.300" rx="1.900" ry="2.500" fill="#f4f4f4"/><path d="M1.600 4.300q2.400 1.300 4.800 0l-.300 1.300q-2.100 1-4.200 0z" fill="#e0302c"/><ellipse cx="2" cy="9" rx="1.400" ry=".6" fill="#f0a020"/><ellipse cx="6" cy="9" rx="1.400" ry=".6" fill="#f0a020"/></svg>
<svg style="left:442.6px;top:304.6px" width="7" height="10" viewBox="0 0 7 10"><rect x="2" y=".3" width="3" height="5.600" rx="1.500" fill="#e59aa6"/><path d="M.600 4.600c0 2 1.300 3.200 2.900 3.200s2.900-1.200 2.900-3.200" fill="none" stroke="#dc94a0" stroke-width=".7"/><path d="M3.500 7.800v1.800" stroke="#dc94a0" stroke-width=".7"/></svg>
<svg style="left:455.6px;top:305.6px" width="9.5" height="8.2" viewBox="0 0 9.5 8.2"><ellipse cx="3.800" cy="3.200" rx="3.700" ry="3.100" fill="#cbcbd2"/><ellipse cx="6.400" cy="5.200" rx="2.900" ry="2.400" fill="#d6d6dc"/><path d="M1.800 5.600l-.400 1.600 1.700-.900z" fill="#cbcbd2"/></svg>
<svg style="left:472.8px;top:305.4px" width="9.6" height="8.8" viewBox="0 0 9.6 8.8"><rect x="0" y=".800" width="9.600" height="7.600" rx="1.600" fill="#f08a3c"/><rect x="1.200" y="2" width="7.200" height="5.200" rx=".8" fill="#fbdcc0"/><path d="M2.600 5.600l1.600-1.600 1.200 1 1.400-1.400" stroke="#f07a2a" stroke-width=".7" fill="none"/></svg>
<svg style="left:489.8px;top:305.8px" width="8" height="6.5" viewBox="0 0 8 6.5"><path d="M.400 2.200a5.300 5.300 0 0 1 7.200 0M1.700 3.700a3.400 3.400 0 0 1 4.600 0" fill="none" stroke="#6a6a70" stroke-width=".8"/><circle cx="4" cy="5.400" r=".8" fill="#6a6a70"/></svg>
<svg style="left:500.8px;top:305.6px" width="7" height="6.8" viewBox="0 0 7 6.8"><path d="M.400 2.400h1.400L3.800.600v5.600L1.800 4.400H.400z" fill="#5a5a60"/><path d="M4.800 2a2 2 0 0 1 0 2.800M5.800 1a3.400 3.400 0 0 1 0 4.800" fill="none" stroke="#5a5a60" stroke-width=".6"/></svg>
<svg style="left:510.8px;top:306px" width="9" height="6" viewBox="0 0 9 6"><rect x=".400" y=".800" width="7.400" height="4.400" rx="1" fill="#222"/><rect x="8" y="2.200" width=".8" height="1.600" fill="#222"/><path d="M3 1l-1 2h1.600l-.800 2" stroke="#fff" stroke-width=".5" fill="none"/></svg>
<div class="s" style="left:521px;width:28.400px;text-align:right;top:303.5px;font-size:5.200px;color:#222">19:22</div>
<div class="s" style="left:516px;width:33.400px;text-align:right;top:310.1px;font-size:5.200px;color:#222">2022/5/18</div>
<svg style="left:553px;top:305.4px" width="7.5" height="8" viewBox="0 0 7.5 8"><path d="M5.800 5.800A3.400 3.400 0 1 1 3.400.800 2.800 2.800 0 0 0 5.800 5.800z" fill="none" stroke="#333" stroke-width=".8"/><path d="M5.400.600l.400 1 .900.300-.900.300-.400 1-.300-1-1-.300 1-.300z" fill="#333"/></svg>
<svg style="left:554.6px;top:75.4px" width="7.5" height="6" viewBox="0 0 7.5 6"><path d="M0 1.200h7.500M0 4.600h7.500" stroke="#555" stroke-width=".7"/><circle cx="5" cy="1.200" r="1" fill="#fff" stroke="#555" stroke-width=".6"/><circle cx="2.400" cy="4.600" r="1" fill="#fff" stroke="#555" stroke-width=".6"/></svg>
<svg style="left:554.8px;top:91px" width="7.5" height="7.5" viewBox="0 0 7.5 7.5"><path d="M3.750.500l1 2.100 2.300.300-1.700 1.600.400 2.300-2-1.100-2 1.100.400-2.300L.450 2.900l2.300-.300z" fill="none" stroke="#555" stroke-width=".7"/></svg>
<svg style="left:554.8px;top:107.6px" width="7.5" height="7" viewBox="0 0 7.5 7"><path d="M.500 2.500V.500h4M2 6.500h5V2H2z" fill="none" stroke="#555" stroke-width=".7"/><path d="M3.200 5l1-1.200.800.800.800-.800" fill="none" stroke="#555" stroke-width=".5"/></svg>
<svg style="left:555.2px;top:124.2px" width="6.8" height="6.8" viewBox="0 0 6.8 6.8"><circle cx="3.400" cy="3.400" r="2.900" fill="none" stroke="#555" stroke-width=".7"/><path d="M2.500 2.700a1 1 0 1 1 1.300 1v.600" fill="none" stroke="#555" stroke-width=".6"/><circle cx="3.700" cy="5.100" r=".35" fill="#555"/></svg>
<div style="left:545.4px;top:253.6px;width:1.6px;height:0.7px;background:#999"></div>
<div style="left:545.4px;top:256.8px;width:1.6px;height:0.7px;background:#999"></div>
<div style="left:545.4px;top:260px;width:1.6px;height:0.7px;background:#999"></div>
<div style="left:545.6px;top:69.4px;width:1.6px;height:1px;background:#aaa"></div>


  </div>
  <div id="rpanel" class="abs">
  <style>
.tile{left:6px;width:116.5px;height:65px;background:#2f3033;border:1px solid #505154;border-radius:3px}
.tile.act{border:2px solid #30b46e;background:#2e2f32;height:66px}
.lab{left:0.8px;bottom:.6px;height:13.5px;background:#1b1c1e;border-radius:0 0 0 2px}
.lab .t{font-size:9px;font-weight:700;color:#fff;top:3.1px;letter-spacing:0.15px}
.av{left:43px;top:11.6px;width:30px;height:30px;border-radius:50%;overflow:hidden}
.tile.act .av{left:41.6px;top:11.300px}
.mm{left:2.200px;top:1px;width:11px;height:11.600px}
</style>
<svg width="0" height="0" style="position:absolute"><defs>
<symbol id="mmic" viewBox="0 0 10 10.5">
  <rect x="3.1" y="0.6" width="4" height="6" rx="2" fill="#f2f2f2"/>
  <path d="M1.8 4.8c0 2 1.4 3.3 3.3 3.3s3.3-1.3 3.3-3.3" fill="none" stroke="#f2f2f2" stroke-width="0.9"/>
  <path d="M5.1 8v1.6M3.4 9.8h3.4" stroke="#f2f2f2" stroke-width="0.9"/>
  <path d="M1.2 9.2L8.600 1" stroke="#e0484c" stroke-width="1.400"/>
</symbol>
</defs></svg>
<div style="left:0;top:19px;width:126px;height:21px;background:linear-gradient(90deg,#48494b 0%,#3c3d3f 35%,#2e2f31 75%,#28292b 100%)"></div>
<div class="tile act" style="top:39.7px">
  <div class="av" style="background:radial-gradient(circle at 50% 45%,#f8e9e6 0%,#f3dcd8 70%,#e6c7c2 100%)">
    <svg width="30" height="30" viewBox="0 0 30 30" style="left:0;top:0;filter:blur(.35px)">
      <ellipse cx="8.2" cy="16.8" rx="4.6" ry="4.2" fill="#f0c4c6" opacity=".7"/><ellipse cx="21.8" cy="15.2" rx="4.4" ry="4" fill="#f0c4c6" opacity=".7"/>
      <ellipse cx="8.3" cy="16.600" rx="4.100" ry="3.700" fill="#c9526a"/><ellipse cx="8.600" cy="17.400" rx="2.300" ry="2" fill="#ee9aa8"/>
      <ellipse cx="21.600" cy="15.200" rx="3.900" ry="3.600" fill="#c9526a"/><ellipse cx="21.400" cy="16" rx="2.200" ry="1.900" fill="#ee9aa8"/>
      <path d="M3.600 15.800q3.200-4.800 8.600-2.600" fill="none" stroke="#8a4652" stroke-width="1.400"/>
      <path d="M17.600 12.200q4.200-2.800 8.200 1.800" fill="none" stroke="#8a4652" stroke-width="1.400"/>
      <path d="M13.200 24.200q1.600-2 3.200-.800 1.200.900 2.600-.200" fill="none" stroke="#c8606c" stroke-width="1.100"/>
      <circle cx="15" cy="28.300" r="0.500" fill="#7a4046"/>
    </svg>
  </div>
  <div class="lab" style="left:0;bottom:0;width:112.5px;height:12.800px;border-radius:0 0 1px 1px">
    <svg style="left:1.6px;top:2.300px" width="11" height="10.5" viewBox="0 0 11 10.5">
      <rect x="0" y="0" width="10.6" height="8" rx="1" fill="#f4f4f4"/>
      <path d="M3 6.3c0.4-2 1.8-3.1 3.6-3.2V1.9L8.8 3.8 6.6 5.6V4.5C5.100 4.500 3.900 5.100 3 6.300z" fill="#222"/>
      <rect x="2.8" y="9" width="5.2" height="1.4" rx="0.5" fill="#f4f4f4"/>
    </svg>
    <svg style="left:16.6px;top:1.800px" width="10" height="11" viewBox="0 0 10 11">
      <rect x="3" y="0.4" width="4" height="6.4" rx="2" fill="#f2f2f2"/>
      <path d="M0.900 5c0 2.300 1.800 3.800 4.100 3.800s4.100-1.500 4.100-3.800" fill="none" stroke="#f2f2f2" stroke-width="1.100"/>
      <path d="M5 8.800v2" stroke="#f2f2f2" stroke-width="1.100"/>
    </svg>
    <div class="t" style="left:29.800px;top:3.100px">张岔慧的屏幕…</div>
    <div style="left:100.400px;top:8px;width:2px;height:3.800px;background:#e5484d"></div>
    <div style="left:104.100px;top:5.600px;width:2.200px;height:6.200px;background:#f2f2f2"></div>
    <div style="left:107.800px;top:3.400px;width:2.200px;height:8.400px;background:#f2f2f2"></div>
  </div>
</div>
<div class="tile" style="top:109.1px">
  <div class="av" style="background:radial-gradient(circle at 50% 48%,#ab854c 0%,#94703c 40%,#75552a 72%,#553d20 90%,#3a2a18 100%)">
    <svg width="30" height="30" viewBox="0 0 30 30" style="left:0;top:0;filter:blur(0.7px)">
      <path d="M3 16.500c1.500-3 4.500-4.500 7.500-5.500 2-.800 4-3 6-2.800 1 .300-.800 2-2 3 2-.300 4-.500 5.500.200l3-1.400c1.500.800 3.500 4 4.500 7-2-.500-4-.300-6 .700-2.500 1.300-4.500 2.300-7.500 1.600-1.500-.300-2.500 1.200-4.500 1-2.800-.400-4.500-2-6.500-3.800z" fill="#dcb878" opacity=".9"/>
      <path d="M18 12.500c1.800-1.300 3.600-2 5-1.500 1.600 1.200 2.800 3.800 3.600 6-2.800-.400-5.800-1.300-8.600-4.500z" fill="#f4e2b4"/>
      <path d="M10 11.500c2-1.500 4-2.800 6-2.600-1.500 1.500-3.500 3-5.500 4z" fill="#f0dca8"/>
      <path d="M4.500 16.500c1.500-.800 3.500-1.600 5-1.200-.800 1.600-2.400 3.200-4 3.600z" fill="#ecd49c"/>
      <path d="M9 13.500l3 4M13 12l2.500 5M7 15.500l2 3.500M12 19.500q3-1 5-3.500" stroke="#7a5628" stroke-width="1.100" fill="none" opacity=".8"/>
      <path d="M7 22.500q7 3 14-.500" stroke="#4e3618" stroke-width="1.400" fill="none" opacity=".7"/>
    </svg>
  </div>
  <div class="lab" style="width:85.5px"><svg class="mm"><use href="#mmic"/></svg><div class="t" style="left:16.4px">21贸二20沈诗雨</div></div>
</div>
<div class="tile" style="top:178.2px">
  <div class="av" style="background:linear-gradient(100deg,#456e36 0%,#3c6030 30%,#587e48 52%,#8eae76 72%,#a4c08c 84%,#54743f 100%)">
    <svg width="30" height="30" viewBox="0 0 30 30" style="left:0;top:0;filter:blur(0.7px)">
      <path d="M0 0h30v7c-4-3-8-3.500-12-2-3-2-8-1-10 2-3 1-6 3-8 6z" fill="#33502c" opacity=".55"/>
      <path d="M19 3c2 2 3 5 3.500 8M23 2c1.500 3 2 6 2 9" stroke="#c6dcae" stroke-width="1.200" fill="none" opacity=".7"/>
      <path d="M11.300 6.500c.800-2.300 4.800-2.600 6-.300 1 1.900.700 4.500-.300 5.800h-5c-1.100-1.500-1.400-3.600-.700-5.500z" fill="#33262a"/>
      <ellipse cx="14.600" cy="8.600" rx="1.900" ry="2.300" fill="#efcfc6"/>
      <path d="M11.400 11.800c2-1 4.800-1 6.400 0 2.600 4.200 6.200 9 9.200 12.400-3.500 3.600-7.500 5.300-12.500 5.300-4.500 0-7.800-1.400-10.300-3.600 2-4.600 4.700-9.600 7.200-14.100z" fill="#f0c6d7"/>
      <path d="M13.600 13c.800 4 .800 9.500.300 15.500l4.500-.300c-.200-5.600-.900-10.600-2-15.200z" fill="#f9e6ee"/>
      <path d="M6 25.500q8.500 4.500 19.500-1l1 5.500H5z" fill="#f3eff0" opacity=".9"/>
    </svg>
  </div>
  <div class="lab" style="width:53px">
    <div style="left:-.3px;top:-.300px;width:13.600px;height:13.600px;background:#f5923a;border-radius:0 0 0 2px"></div>
    <svg style="left:2.200px;top:2px" width="9" height="9.500" viewBox="0 0 8.500 9"><circle cx="4.250" cy="2.600" r="2.100" fill="#fff"/><path d="M0 9c0-2.800 1.800-4 4.250-4s4.250 1.200 4.250 4z" fill="#fff"/></svg>
    <svg class="mm" style="left:17px"><use href="#mmic"/></svg><div class="t" style="left:30.800px">李娜</div></div>
</div>
<div class="tile" style="top:247.300px">
  <div class="av" style="background:radial-gradient(circle at 45% 45%,#4f9a4c 0%,#3c8a3e 50%,#2a6e30 85%,#1c4a22 100%)">
    <svg width="30" height="30" viewBox="0 0 30 30" style="left:0;top:0;filter:blur(0.500px)">
      <path d="M18 3c2 3 3 6 4 8 1 1 3 1.500 4.500 2-3 2-7 3.500-10 4.500l-2-2c1-4 2-8 3.500-12.500z" fill="#b4dcb6" opacity=".72"/>
      <path d="M19 6c1 3 1.500 5 2.500 7" stroke="#e8f4e8" stroke-width="1" fill="none"/>
      <path d="M10 17.500c1.600-1.600 4-2.400 5.600-1.600 1.200.800 1.600 2.400.800 4-.800 1.600-2.400 2.400-3.200 4l1 6h-3.400l-.900-6c-.800-2.400-.700-4.800.100-6.400z" fill="#cdbcb4" opacity=".9"/>
      <path d="M11.200 19c1.200-.800 2.400-.800 3.200 0 .400 1.600-.800 3.200-2 3.600-1.200-.400-1.600-2.400-1.200-3.600z" fill="#b08890"/>
      <path d="M6 26l6-8" stroke="#cfe6cf" stroke-width="2"/>
    </svg>
  </div>
  <div class="lab" style="width:84.500px"><svg class="mm"><use href="#mmic"/></svg><div class="t" style="left:16.400px">20物管二刘雯怡</div></div>
</div>
<div class="tile" style="top:316.400px">
  <div class="av" style="background:linear-gradient(165deg,#2c7688 0%,#3f7eb4 28%,#5a88c0 60%,#8a9cbc 100%);box-shadow:inset 0 0 0 .7px rgba(20,30,50,.55)">
    <svg width="30" height="30" viewBox="0 0 30 30" style="left:0;top:0;filter:blur(0.450px)">
      <path d="M0 9c2.500 4 4.500 10 6.500 15.500l9 5.500H0z" fill="#c4c9d6"/><path d="M8 25.500c5-1.500 11-1.500 16-.500l-3 5H10z" fill="#aab2c4"/>
      <path d="M5 8l3 8" stroke="#3a2a30" stroke-width="1.400"/>
      <path d="M6 14c1.500 1 3 3 4 6 1 3 1.500 5 1 7l-3-.5c-1-4-2-8-2-12.500z" fill="#f0a030" stroke="#9a6418" stroke-width=".5"/>
      <path d="M13 15c1-3 3-5 6-6 2-.5 4 .5 4.500 2.500.5 2 0 3-1 4 0 3-1 6-2.500 9l-3 .500c0-2-.5-4-1-5-1 2-2 4-2 6l-2.500-.500c0-4 1-8 2-10.500z" fill="#f5a324" stroke="#9a6418" stroke-width=".5"/>
      <path d="M21.500 11.500l2.600 1.200-.800 1.600-1.600-.600z" fill="#1e1a1a"/><path d="M20.500 9.500c1 .300 1.600 1.200 1.400 2.400" stroke="#2a2020" stroke-width=".7" fill="none"/>
      <path d="M14 27c3 1 6 1 9-.500l-1 3.500h-9z" fill="#dfe3ea"/>
    </svg>
  </div>
  <div class="lab" style="width:75px"><svg class="mm"><use href="#mmic"/></svg><div class="t" style="left:16.400px">19财一丁宗慧</div></div>
</div>
<div class="tile" style="top:385.500px;height:40px;border-bottom:none;border-radius:3px 3px 0 0">
  <div class="av" style="background:#1a76f5"><div class="t" style="left:5px;top:8.500px;font-size:9.500px;font-weight:700;color:#fff">刘宇</div></div>
</div>
<div style="left:0;top:408.800px;width:126px;height:39.200px;background:linear-gradient(100deg,#404143 0%,#343537 35%,#28292b 75%,#232426 100%)"></div>

  </div>
  <!-- speaking bar -->
<div class="abs" style="left:541.7px;top:10.6px;width:153px;height:25.2px;background:#313234;border-radius:4px 0 0 4px;box-shadow:0 0 1.5px rgba(0,0,0,.5)">
  <div style="left:26px;top:0;width:1px;height:25.2px;background:#3e3f41"></div>
  <svg style="left:9.5px;top:6.2px" width="9" height="12" viewBox="0 0 9 12">
    <rect x="2.6" y="0.4" width="3.8" height="6.6" rx="1.9" fill="#b97278"/>
    <path d="M0.8 5.4c0 2.300 1.600 3.700 3.700 3.700s3.700-1.400 3.700-3.700" fill="none" stroke="#a8686e" stroke-width="1"/>
    <path d="M4.500 9.100v2M2.800 11.300h3.400" stroke="#a8686e" stroke-width="1"/>
    <path d="M0.800 10L8 1.200" stroke="#8a4a52" stroke-width="1"/>
  </svg>
  <div class="t" style="left:34.600px;top:8.300px;font-size:9px;font-weight:700;color:#fff;letter-spacing:0.100px">正在讲话: 张岔慧;</div>
  <svg style="left:140px;top:5px" width="14" height="16" viewBox="0 0 14 16">
    <path d="M0 7.500L6.500 0.500 14 6v6l-4.500 3.500z" fill="#4b4c4e"/>
    <path d="M5 6.500l5 5" stroke="#3a3b3d" stroke-width="1.200"/>
  </svg>
</div>
<!-- bottom-left sharing label -->
<div class="abs" style="left:0;top:448px;width:130px;height:16px">
  <svg style="left:3.600px;top:3px" width="11" height="10.500" viewBox="0 0 11 10.500">
    <rect x="0" y="0" width="10.600" height="8" rx="1" fill="#f4f4f4"/>
    <path d="M3 6.300c0.400-2 1.800-3.100 3.600-3.200V1.900L8.800 3.800 6.600 5.600V4.500C5.100 4.500 3.900 5.100 3 6.300z" fill="#222"/>
    <rect x="2.800" y="9" width="5.200" height="1.400" rx="0.500" fill="#f4f4f4"/>
  </svg>
  <svg style="left:17.500px;top:2.500px" width="10" height="11" viewBox="0 0 10 11">
    <rect x="3" y="0.400" width="4" height="6.400" rx="2" fill="#f2f2f2"/>
    <path d="M0.900 5c0 2.300 1.800 3.800 4.100 3.800s4.100-1.500 4.100-3.800" fill="none" stroke="#f2f2f2" stroke-width="1.100"/>
    <path d="M5 8.800v2" stroke="#f2f2f2" stroke-width="1.100"/>
  </svg>
  <div class="t" style="left:31px;top:3.700px;font-size:9px;font-weight:700;color:#fff;letter-spacing:0.100px">张岔慧的屏幕共享</div>
  <div style="left:106.800px;top:9px;width:2px;height:3.800px;background:#e5484d"></div>
  <div style="left:110.300px;top:6.600px;width:2.200px;height:6.200px;background:#f2f2f2"></div>
  <div style="left:113.800px;top:4.400px;width:2.200px;height:8.400px;background:#f2f2f2"></div>
</div>
<!-- panel collapse handle -->
<div class="abs" style="left:563.8px;top:280px;width:5px;height:26px;background:#4a4b4e;border-radius:2px 0 0 2px"><div style="left:1.8px;top:3.600px;width:1.800px;height:19px;border-radius:1px;background:linear-gradient(180deg,#6a6b6e 0%,#c08a52 25%,#9a9a70 55%,#4aa2a2 100%)"></div></div>

</div>
</body>
</html>
